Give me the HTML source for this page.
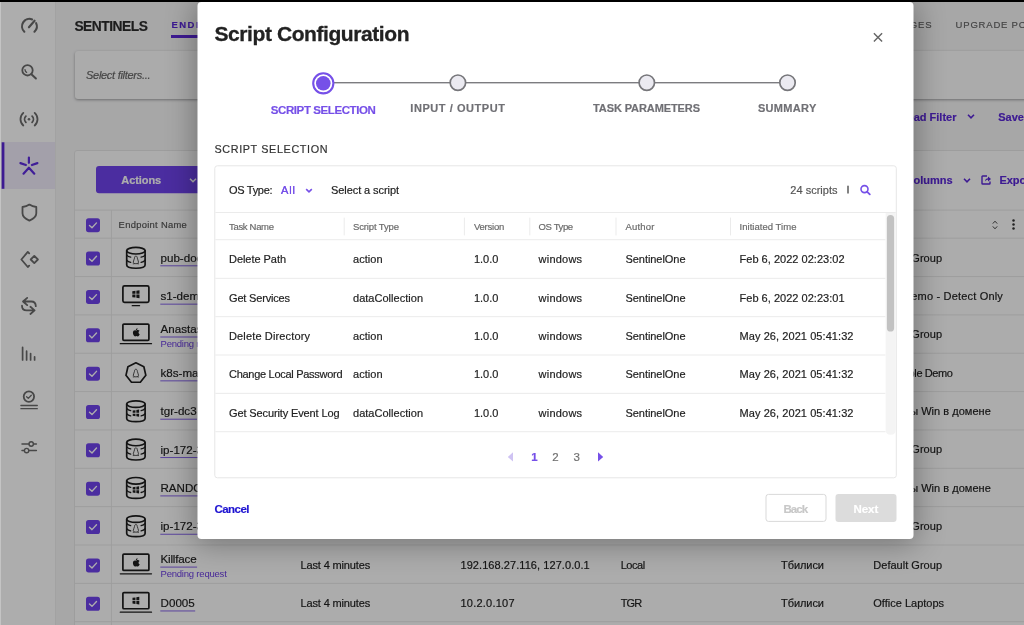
<!DOCTYPE html>
<html lang="en">
<head>
<meta charset="utf-8">
<title>Script Configuration</title>
<style>
*{box-sizing:border-box;margin:0;padding:0}
html,body{width:1024px;height:625px;overflow:hidden}
body{position:relative;background:#f6f6f7;font-family:"Liberation Sans","DejaVu Sans",sans-serif;font-size:11px;color:#333}
.abs{position:absolute;white-space:nowrap;-webkit-text-stroke:.18px currentColor}
#topbar{position:absolute;left:0;top:0;width:1024px;height:2px;background:#000;z-index:50}
#leftedge{position:absolute;left:0;top:2px;width:1px;height:623px;background:#c4c4c4;z-index:50}

/* ---------- background app ---------- */
#app{position:absolute;left:0;top:0;width:1024px;height:625px;overflow:hidden;will-change:transform}
#side{position:absolute;left:0;top:0;width:56px;height:625px;background:#fff;border-right:1px solid #efefef}
#side .act{position:absolute;left:0;top:142px;width:55px;height:47px;background:#f0ecfb}
#side .act i{display:none}
#side svg{position:absolute;overflow:visible}
.ic{fill:none;stroke:#6a6a6a;stroke-width:1.8;stroke-linecap:round;stroke-linejoin:round}
.icp{fill:none;stroke:#5f2de0;stroke-width:2.2;stroke-linecap:round;stroke-linejoin:round}

#pgtitle{left:74px;top:17px;font-size:14.5px;font-weight:bold;color:#2b2b2b;letter-spacing:-.1px;line-height:18px}
.tab{font-size:10px;letter-spacing:1.7px;color:#666;line-height:12px;top:19px}
.tab.on{color:#5a27d8;font-weight:bold}
#tabline{position:absolute;left:171px;top:35px;width:60px;height:3px;background:#5a27d8}
#filter{position:absolute;left:75px;top:51px;width:980px;height:48px;background:#fcfcfc;border-radius:3px;box-shadow:0 1px 3px rgba(0,0,0,.35)}
#filter span{left:11px;top:17px;font-style:italic;font-size:11px;color:#666;line-height:14px}
.lnk{font-weight:bold;color:#5a27d8;font-size:11.5px;line-height:14px}
#panel{position:absolute;left:74px;top:150px;width:980px;height:500px;background:#fefefe;border:1px solid #e8e8e8;border-radius:3px}
#actions{position:absolute;left:96px;top:166px;width:160px;height:27px;background:#6f43ec;border-radius:3px}
#actions span{left:25px;top:6.5px;color:#fff;font-weight:bold;font-size:11.5px;line-height:14px}
.hline{position:absolute;left:76px;width:960px;height:1px;background:#dedede}
.vline{position:absolute;width:1px;background:#dedede}
.cb{position:absolute;left:86px;width:14px;height:14px;background:#6b3fe4;border-radius:2.5px}
.cb svg{position:absolute;left:0;top:0}
.cell{position:absolute;white-space:nowrap;font-size:11.5px;line-height:14px;color:#222}
.nm{border-bottom:1px solid #6b3fe4;line-height:14px;padding-bottom:0}
.pend{position:absolute;white-space:nowrap;font-size:9.5px;line-height:11px;color:#5a27d8;left:160px}
.dev{position:absolute;overflow:visible}
.dv{fill:none;stroke:#1d1d1d;stroke-width:1.7;stroke-linejoin:round;stroke-linecap:round}

#overlay{position:absolute;left:0;top:0;width:1024px;height:625px;background:rgba(0,0,0,.32)}

/* ---------- modal ---------- */
#modal{will-change:transform;transform:translate(-.5px,-.1px);position:absolute;left:198px;top:2px;width:716px;height:537px;background:#fff;border-radius:4px;box-shadow:0 3px 30px 2px rgba(0,0,0,.33)}
#modal .abs{line-height:14px}
#mtitle{left:16px;top:20px;font-size:21px;font-weight:bold;color:#222;letter-spacing:-.42px;line-height:24px !important}
.step{font-size:11.5px;font-weight:bold;color:#6e6e73;letter-spacing:.45px;text-align:center;transform:translateX(-50%)}
.step.on{color:#6b45e0;font-size:12px;letter-spacing:.1px}
.dot{position:absolute;width:17px;height:17px;border-radius:50%;background:#e9e8f0;border:1.6px solid #85858c}
#sline{position:absolute;left:126px;top:80px;width:464px;height:2px;background:#8a8a90}
#sec{left:16.5px;top:140px;font-size:12px;letter-spacing:1.25px;color:#333}
#box{position:absolute;left:16.5px;top:164px;width:682.5px;height:313px;border:1px solid #e9e9e9;border-radius:4px;background:#fff}
.mh{position:absolute;left:17.5px;width:671px;height:1px;background:#ececec}
.mv{position:absolute;top:216px;width:1px;height:18px;background:#ececec}
.th{position:absolute;white-space:nowrap;font-size:10px;color:#666;line-height:12px;top:219px}
.td{position:absolute;white-space:nowrap;font-size:11.5px;color:#222;line-height:14px}
</style>
</head>
<body>
<div id="app">
<div id="side"><div class="act"><i></i></div><svg class="abs" style="left:0;top:0" width="56" height="625" viewBox="0 0 56 625"><path class="ic" d="M24.35 31.71A7.4 7.4 0 0 1 32.17 19.44 M36.11 23.17A7.4 7.4 0 0 1 34.45 31.71 M28.9 27.3L34.6 20.7" style="stroke-width:2.1"/><circle class="ic" cx="27.5" cy="70.3" r="5.2"/><path class="ic" d="M31.4 74.2L35.9 78.5" style="stroke-width:2"/><path class="ic" d="M25 69.6Q25.2 71.6 26.6 72.4" style="stroke-width:1.3"/><circle cx="29" cy="119.2" r="1.3" fill="#707070"/><path class="ic" d="M25.89 122.31A4.4 4.4 0 0 1 25.89 116.09 M32.11 116.09A4.4 4.4 0 0 1 32.11 122.31 M23.31 125.52A8.5 8.5 0 0 1 23.31 112.88 M34.69 112.88A8.5 8.5 0 0 1 34.69 125.52"/><path class="icp" d="M28.9 157.6V162.8M20.4 163.1L25.9 165M37.4 163.1L31.9 165M23.5 173.7L28.9 167.7L34.3 173.7"/><rect x="1.7" y="142.3" width="2.7" height="46.5" fill="#5a27d8"/><path class="ic" d="M29.4 204.6C27.4 206 25 206.8 22.5 207V213.2C22.5 216.6 25.4 218.8 29.4 220.6C33.4 218.8 36.3 216.6 36.3 213.2V207C33.8 206.8 31.4 206 29.4 204.6Z"/><path class="ic" d="M29.2 253.3L27.8 251.9L21.4 259.5L27.8 267L29.2 265.6"/><path class="ic" d="M34.3 255.9L37.9 259.5L34.3 263.1L30.7 259.5Z"/><path class="ic" d="M27.2 297.9L23 301.5L27.2 305.1M23.4 301.5H31.2C34.2 301.5 35.8 303.6 35.8 306.2"/><path class="ic" d="M30.4 306.8L34.6 310.4L30.4 314M34.2 310.4H26.6C23.6 310.4 22 308.3 22 305.7"/><path class="ic" d="M22.6 347.4V360M26.6 351.2V360M30.6 353.6V360M34.6 356.8V360" style="stroke-width:1.7"/><circle class="ic" cx="28.9" cy="396.6" r="5.2"/><path class="ic" d="M26.6 396.8L28.3 398.4L31.3 395.2" style="stroke-width:1.3"/><path class="ic" d="M20.9 405.5H37.3M20.9 408.7H37.3" style="stroke-width:1.3"/><path class="ic" d="M22 444H28.8M33.6 444H36.4M22 450.6H24.2M29 450.6H36.4" style="stroke-width:1.5"/><circle class="ic" cx="31.2" cy="444" r="2.2" style="stroke-width:1.4"/><circle class="ic" cx="26.6" cy="450.6" r="2.2" style="stroke-width:1.4"/></svg></div>
<span class="abs " style="left:74.4px;top:17.8px;font-size:13.8px;line-height:18px;font-weight:bold;color:#2b2b2b;letter-spacing:-0.481px">SENTINELS</span>
<span class="abs " style="left:171.4px;top:19.3px;font-size:9.5px;line-height:12px;font-weight:bold;color:#5a27d8;letter-spacing:1.5px">ENDPOINTS</span>
<div id="tabline" style="left:171px;top:35px;width:74px;height:3px"></div>
<span class="abs " style="left:880.0px;top:19.0px;font-size:9.5px;line-height:12px;color:#666;letter-spacing:0.9px;left:auto;right:91.6px">PACKAGES</span>
<span class="abs " style="left:955.6px;top:19.0px;font-size:9.5px;line-height:12px;color:#666;letter-spacing:0.8px">UPGRADE POLICY</span>
<div id="filter"></div>
<span class="abs " style="left:86.0px;top:68.3px;font-size:11px;line-height:14px;font-style:italic;color:#666;letter-spacing:-0.286px">Select filters...</span>
<span class="abs " style="left:880.0px;top:109.6px;font-size:11px;line-height:14px;font-weight:bold;color:#5a27d8;left:auto;right:67.5px">Load Filter</span>
<svg class="abs" style="left:966.5px;top:114.4px;overflow:visible" width="8" height="5" viewBox="0 0 8 5"><path d="M1 .8L4 3.8L7 .8" stroke="#5a27d8" stroke-width="1.6" fill="none"/></svg>
<span class="abs " style="left:998.2px;top:109.6px;font-size:11px;line-height:14px;font-weight:bold;color:#5a27d8">Save Filter</span>
<div id="panel"></div>
<svg class="abs" style="left:0;top:0" width="300" height="200" viewBox="0 0 300 200"><rect x="96" y="166.1" width="170" height="27.2" rx="3" fill="#6f43ec"/></svg>
<span class="abs " style="left:121.3px;top:173.0px;font-size:11px;line-height:14px;font-weight:bold;color:#fff;letter-spacing:-0.073px">Actions</span>
<svg class="abs" style="left:188.6px;top:177.8px;overflow:visible" width="8" height="5" viewBox="0 0 8 5"><path d="M1 .8L4 3.8L7 .8" stroke="#fff" stroke-width="1.5" fill="none"/></svg>
<span class="abs " style="left:880.0px;top:173.2px;font-size:11px;line-height:14px;font-weight:bold;color:#5a27d8;left:auto;right:71.4px">Columns</span>
<svg class="abs" style="left:963.2px;top:178px;overflow:visible" width="8" height="5" viewBox="0 0 8 5"><path d="M1 .8L4 3.8L7 .8" stroke="#5a27d8" stroke-width="1.6" fill="none"/></svg>
<svg class="abs" style="left:981.3px;top:175px;overflow:visible" width="10" height="10" viewBox="0 0 10 10"><path d="M6 1H1.6Q1 1 1 1.6V8.4Q1 9 1.6 9H8.4Q9 9 9 8.4V6.6" stroke="#5a27d8" stroke-width="1.4" fill="none"/><path d="M4 6.6C4 4 5.6 3.2 7 3.2V1.4L10 4L7 6.4V4.8C5.8 4.8 4.8 5.2 4 6.6Z" fill="#5a27d8"/></svg>
<span class="abs " style="left:999.4px;top:173.2px;font-size:11px;line-height:14px;font-weight:bold;color:#5a27d8">Export</span>
<span class="abs " style="left:118.6px;top:219.0px;font-size:9.4px;line-height:12px;color:#555;letter-spacing:0.3px">Endpoint Name</span>
<svg class="abs" style="left:992.4px;top:219.5px;overflow:visible" width="6" height="10" viewBox="0 0 6 10"><path d="M.8 3.6L3 1.2L5.2 3.6M.8 6.4L3 8.8L5.2 6.4" stroke="#444" stroke-width="1" fill="none"/></svg>
<svg class="abs" style="left:1011.5px;top:219.2px;overflow:visible" width="3" height="11" viewBox="0 0 3 11"><circle cx="1.5" cy="1.5" r="1.25" fill="#333"/><circle cx="1.5" cy="5.5" r="1.25" fill="#333"/><circle cx="1.5" cy="9.5" r="1.25" fill="#333"/></svg>
<span class="abs " style="left:160.5px;top:250.9px;font-size:11.6px;line-height:14px;color:#222">pub-docker-01</span>
<span class="abs " style="left:873.3px;top:250.7px;font-size:11px;line-height:14px;color:#222;letter-spacing:0.018px">Default Group</span>
<span class="abs " style="left:160.5px;top:289.2px;font-size:11.6px;line-height:14px;color:#222">s1-demo-win10</span>
<span class="abs " style="left:903.2px;top:289.1px;font-size:11px;line-height:14px;color:#222;letter-spacing:0.179px">Demo - Detect Only</span>
<span class="abs " style="left:160.5px;top:322.1px;font-size:11.6px;line-height:14px;color:#222">Anastasia-MBP</span>
<span class="abs " style="left:160.5px;top:338.1px;font-size:9.5px;line-height:11px;color:#6a3ce0;letter-spacing:-0.207px;-webkit-text-stroke:0">Pending request</span>
<span class="abs " style="left:873.3px;top:327.4px;font-size:11px;line-height:14px;color:#222;letter-spacing:0.018px">Default Group</span>
<span class="abs " style="left:160.5px;top:365.9px;font-size:11.6px;line-height:14px;color:#222">k8s-master-1</span>
<span class="abs " style="left:890.8px;top:365.8px;font-size:11px;line-height:14px;color:#222;letter-spacing:-0.383px">Simple Demo</span>
<span class="abs " style="left:160.5px;top:404.3px;font-size:11.6px;line-height:14px;color:#222">tgr-dc3</span>
<span class="abs " style="left:871.9px;top:404.1px;font-size:11px;line-height:14px;color:#222;letter-spacing:0.026px">Серверы Win в домене</span>
<span class="abs " style="left:160.5px;top:442.6px;font-size:11.6px;line-height:14px;color:#222">ip-172-31-20-7</span>
<span class="abs " style="left:873.3px;top:442.4px;font-size:11px;line-height:14px;color:#222;letter-spacing:0.018px">Default Group</span>
<span class="abs " style="left:160.5px;top:481.0px;font-size:11.6px;line-height:14px;color:#222">RANDOM-SRV</span>
<span class="abs " style="left:871.9px;top:480.8px;font-size:11px;line-height:14px;color:#222;letter-spacing:0.026px">Серверы Win в домене</span>
<span class="abs " style="left:160.5px;top:519.4px;font-size:11.6px;line-height:14px;color:#222">ip-172-31-44-9</span>
<span class="abs " style="left:873.3px;top:519.1px;font-size:11px;line-height:14px;color:#222;letter-spacing:0.018px">Default Group</span>
<span class="abs " style="left:160.5px;top:552.2px;font-size:11.6px;line-height:14px;color:#222;letter-spacing:-0.171px">Killface</span>
<span class="abs " style="left:160.5px;top:568.2px;font-size:9.5px;line-height:11px;color:#6a3ce0;letter-spacing:-0.207px;-webkit-text-stroke:0">Pending request</span>
<span class="abs " style="left:300.5px;top:557.5px;font-size:11px;line-height:14px;color:#222;letter-spacing:-0.141px">Last 4 minutes</span>
<span class="abs " style="left:460.5px;top:557.5px;font-size:11px;line-height:14px;color:#222;letter-spacing:0.065px">192.168.27.116, 127.0.0.1</span>
<span class="abs " style="left:620.7px;top:557.5px;font-size:11px;line-height:14px;color:#222;letter-spacing:-0.449px">Local</span>
<span class="abs " style="left:781.0px;top:557.5px;font-size:11px;line-height:14px;color:#222;letter-spacing:-0.062px">Тбилиси</span>
<span class="abs " style="left:873.3px;top:557.5px;font-size:11px;line-height:14px;color:#222;letter-spacing:0.018px">Default Group</span>
<span class="abs " style="left:160.5px;top:596.1px;font-size:11.6px;line-height:14px;color:#222;letter-spacing:0.029px">D0005</span>
<span class="abs " style="left:300.5px;top:595.9px;font-size:11px;line-height:14px;color:#222;letter-spacing:-0.141px">Last 4 minutes</span>
<span class="abs " style="left:460.5px;top:595.9px;font-size:11px;line-height:14px;color:#222;letter-spacing:0.223px">10.2.0.107</span>
<span class="abs " style="left:620.7px;top:595.9px;font-size:11px;line-height:14px;color:#222;letter-spacing:-0.86px">TGR</span>
<span class="abs " style="left:781.0px;top:595.9px;font-size:11px;line-height:14px;color:#222;letter-spacing:-0.062px">Тбилиси</span>
<span class="abs " style="left:873.3px;top:595.9px;font-size:11px;line-height:14px;color:#222;letter-spacing:0.005px">Office Laptops</span>
<svg class="abs" style="left:0;top:0" width="1024" height="625" viewBox="0 0 1024 625"><rect x="75" y="209.6" width="960" height="1" fill="#e8e8e8"/><rect x="75" y="237.7" width="960" height="1" fill="#e8e8e8"/><rect x="110.9" y="210" width="1" height="420" fill="#e8e8e8"/><rect x="86" y="218.2" width="14" height="14" rx="2.6" fill="#6f43ec"/><path d="M89.5 225.5L92 227.8L96.5 222.9" stroke="#fff" stroke-width="1.4" fill="none" stroke-linecap="round" stroke-linejoin="round"/><rect x="75" y="276.05" width="960" height="1" fill="#e8e8e8"/><rect x="86" y="251.6" width="14" height="14" rx="2.6" fill="#6f43ec"/><path d="M89.5 258.9L92 261.2L96.5 256.3" stroke="#fff" stroke-width="1.4" fill="none" stroke-linecap="round" stroke-linejoin="round"/><path class="dv" d="M126.70 250.70V265.10C126.70 269.30 145.10 269.30 145.10 265.10V250.70"/><ellipse class="dv" cx="135.90" cy="250.70" rx="9.2" ry="3.3"/><path class="dv" d="M126.70 255.10q1.4 1.6 4 2.1M145.10 255.10q-1.4 1.6 -4 2.1" style="stroke-width:1.3"/><path class="dv" d="M126.70 260.30q1.4 1.6 4 2.1M145.10 260.30q-1.4 1.6 -4 2.1" style="stroke-width:1.3"/><path d="M135.90 256.10c-1 0 -1.4 .9 -1.4 2c0 1.3 -1.2 2.3 -1.2 3.9c0 1.2 1 1.7 2.6 1.7c1.600 0 2.6 -.5 2.6 -1.7c0 -1.600 -1.2 -2.6 -1.2 -3.9c0 -1.1 -.4 -2 -1.400 -2z" fill="none" stroke="#333" stroke-width=".85"/><path d="M132.80 263.80h1.600M137.40 263.80h1.600" stroke="#333" stroke-width=".8"/><rect x="160.3" y="265.3" width="75.4028" height="1" fill="#8563e8"/><rect x="75" y="314.4" width="960" height="1" fill="#e8e8e8"/><rect x="86" y="289.95" width="14" height="14" rx="2.6" fill="#6f43ec"/><path d="M89.5 297.25L92 299.55L96.5 294.65" stroke="#fff" stroke-width="1.4" fill="none" stroke-linecap="round" stroke-linejoin="round"/><rect class="dv" x="122.90" y="285.85" width="26" height="16.6" rx="1.6"/><path class="dv" d="M132.30 305.65H139.50" style="stroke-width:1.4"/><path fill="#1d1d1d" d="M132.30 291.15L135.45 290.70V293.70H132.30ZM136.35 290.65L139.50 290.15V293.70H136.35ZM132.30 294.60H135.45V297.60L132.30 297.15ZM136.35 294.60H139.50V298.15L136.35 297.65Z"/><rect x="160.3" y="303.65" width="79.9059" height="1" fill="#8563e8"/><rect x="75" y="352.75" width="960" height="1" fill="#e8e8e8"/><rect x="86" y="328.3" width="14" height="14" rx="2.6" fill="#6f43ec"/><path d="M89.5 335.6L92 337.9L96.5 333" stroke="#fff" stroke-width="1.4" fill="none" stroke-linecap="round" stroke-linejoin="round"/><rect class="dv" x="122.90" y="324.10" width="26" height="16.2" rx="1"/><path class="dv" d="M120.30 343.70H151.50" style="stroke-width:1.3"/><path fill="#1d1d1d" d="M135.90 330.60c-1.2 -.7 -3 .1 -3 2.2c0 1.8 1.2 3.6 2.2 3.6c.5 0 .7 -.3 1.3 -.3c.6 0 .8 .3 1.3 .3c.9 0 1.7 -1.3 2 -2.2c-1.6 -.7 -1.5 -2.8 -.1 -3.4c-.9 -1.1 -2.4 -.9 -3.1 -.4c-.2 .1 -.4 .1 -.6 .2z"/><path fill="#1d1d1d" d="M135.80 330.10c0 -1 .8 -1.9 1.8 -1.9c.1 1 -.8 2 -1.8 1.9z"/><rect x="160.3" y="336.5" width="80.5457" height="1" fill="#8563e8"/><rect x="75" y="391.1" width="960" height="1" fill="#e8e8e8"/><rect x="86" y="366.65" width="14" height="14" rx="2.6" fill="#6f43ec"/><path d="M89.5 373.95L92 376.25L96.5 371.35" stroke="#fff" stroke-width="1.4" fill="none" stroke-linecap="round" stroke-linejoin="round"/><path class="dv" d="M135.90 362.85L143.87 366.69L145.84 375.32L140.33 382.24L131.47 382.24L125.96 375.32L127.93 366.69Z"/><path d="M135.90 369.25c-1 0 -1.4 .9 -1.4 2c0 1.3 -1.2 2.3 -1.2 3.9c0 1.2 1 1.7 2.6 1.7c1.600 0 2.6 -.5 2.6 -1.7c0 -1.600 -1.2 -2.6 -1.2 -3.9c0 -1.1 -.4 -2 -1.400 -2z" fill="none" stroke="#333" stroke-width=".85"/><path d="M132.80 376.95h1.600M137.40 376.95h1.600" stroke="#333" stroke-width=".8"/><rect x="160.3" y="380.35" width="68.2824" height="1" fill="#8563e8"/><rect x="75" y="429.45" width="960" height="1" fill="#e8e8e8"/><rect x="86" y="405" width="14" height="14" rx="2.6" fill="#6f43ec"/><path d="M89.5 412.3L92 414.6L96.5 409.7" stroke="#fff" stroke-width="1.4" fill="none" stroke-linecap="round" stroke-linejoin="round"/><path class="dv" d="M126.70 404.10V418.50C126.70 422.70 145.10 422.70 145.10 418.50V404.10"/><ellipse class="dv" cx="135.90" cy="404.10" rx="9.2" ry="3.3"/><path class="dv" d="M126.70 408.50q1.4 1.6 4 2.1M145.10 408.50q-1.4 1.6 -4 2.1" style="stroke-width:1.3"/><path class="dv" d="M126.70 413.70q1.4 1.6 4 2.1M145.10 413.70q-1.4 1.6 -4 2.1" style="stroke-width:1.3"/><path fill="#1d1d1d" d="M132.70 410.60L135.45 410.15V412.75H132.70ZM136.35 410.10L139.10 409.60V412.75H136.35ZM132.70 413.65H135.45V416.25L132.70 415.80ZM136.35 413.65H139.10V416.80L136.35 416.30Z"/><rect x="160.3" y="418.7" width="36.7041" height="1" fill="#8563e8"/><rect x="75" y="467.8" width="960" height="1" fill="#e8e8e8"/><rect x="86" y="443.35" width="14" height="14" rx="2.6" fill="#6f43ec"/><path d="M89.5 450.65L92 452.95L96.5 448.05" stroke="#fff" stroke-width="1.4" fill="none" stroke-linecap="round" stroke-linejoin="round"/><path class="dv" d="M126.70 442.45V456.85C126.70 461.05 145.10 461.05 145.10 456.85V442.45"/><ellipse class="dv" cx="135.90" cy="442.45" rx="9.2" ry="3.3"/><path class="dv" d="M126.70 446.85q1.4 1.6 4 2.1M145.10 446.85q-1.4 1.6 -4 2.1" style="stroke-width:1.3"/><path class="dv" d="M126.70 452.05q1.4 1.6 4 2.1M145.10 452.05q-1.4 1.6 -4 2.1" style="stroke-width:1.3"/><path d="M135.90 447.85c-1 0 -1.4 .9 -1.4 2c0 1.3 -1.2 2.3 -1.2 3.9c0 1.2 1 1.7 2.6 1.7c1.600 0 2.6 -.5 2.6 -1.7c0 -1.600 -1.2 -2.6 -1.2 -3.9c0 -1.1 -.4 -2 -1.400 -2z" fill="none" stroke="#333" stroke-width=".85"/><path d="M132.80 455.55h1.600M137.40 455.55h1.600" stroke="#333" stroke-width=".8"/><rect x="160.3" y="457.05" width="76.6951" height="1" fill="#8563e8"/><rect x="75" y="506.15" width="960" height="1" fill="#e8e8e8"/><rect x="86" y="481.7" width="14" height="14" rx="2.6" fill="#6f43ec"/><path d="M89.5 489L92 491.3L96.5 486.4" stroke="#fff" stroke-width="1.4" fill="none" stroke-linecap="round" stroke-linejoin="round"/><path class="dv" d="M126.70 480.80V495.20C126.70 499.40 145.10 499.40 145.10 495.20V480.80"/><ellipse class="dv" cx="135.90" cy="480.80" rx="9.2" ry="3.3"/><path class="dv" d="M126.70 485.20q1.4 1.6 4 2.1M145.10 485.20q-1.4 1.6 -4 2.1" style="stroke-width:1.3"/><path class="dv" d="M126.70 490.40q1.4 1.6 4 2.1M145.10 490.40q-1.4 1.6 -4 2.1" style="stroke-width:1.3"/><path fill="#1d1d1d" d="M132.70 487.30L135.45 486.85V489.45H132.70ZM136.35 486.80L139.10 486.30V489.45H136.35ZM132.70 490.35H135.45V492.95L132.70 492.50ZM136.35 490.35H139.10V493.50L136.35 493.00Z"/><rect x="160.3" y="495.4" width="79.6622" height="1" fill="#8563e8"/><rect x="75" y="544.5" width="960" height="1" fill="#e8e8e8"/><rect x="86" y="520.05" width="14" height="14" rx="2.6" fill="#6f43ec"/><path d="M89.5 527.35L92 529.65L96.5 524.75" stroke="#fff" stroke-width="1.4" fill="none" stroke-linecap="round" stroke-linejoin="round"/><path class="dv" d="M126.70 519.15V533.55C126.70 537.75 145.10 537.75 145.10 533.55V519.15"/><ellipse class="dv" cx="135.90" cy="519.15" rx="9.2" ry="3.3"/><path class="dv" d="M126.70 523.55q1.4 1.6 4 2.1M145.10 523.55q-1.4 1.6 -4 2.1" style="stroke-width:1.3"/><path class="dv" d="M126.70 528.75q1.4 1.6 4 2.1M145.10 528.75q-1.4 1.6 -4 2.1" style="stroke-width:1.3"/><path d="M135.90 524.55c-1 0 -1.4 .9 -1.4 2c0 1.3 -1.2 2.3 -1.2 3.9c0 1.2 1 1.7 2.6 1.7c1.600 0 2.6 -.5 2.6 -1.7c0 -1.600 -1.2 -2.6 -1.2 -3.9c0 -1.1 -.4 -2 -1.400 -2z" fill="none" stroke="#333" stroke-width=".85"/><path d="M132.80 532.25h1.600M137.40 532.25h1.600" stroke="#333" stroke-width=".8"/><rect x="160.3" y="533.75" width="76.6951" height="1" fill="#8563e8"/><rect x="75" y="582.85" width="960" height="1" fill="#e8e8e8"/><rect x="86" y="558.4" width="14" height="14" rx="2.6" fill="#6f43ec"/><path d="M89.5 565.7L92 568L96.5 563.1" stroke="#fff" stroke-width="1.4" fill="none" stroke-linecap="round" stroke-linejoin="round"/><rect class="dv" x="122.90" y="554.20" width="26" height="16.2" rx="1"/><path class="dv" d="M120.30 573.80H151.50" style="stroke-width:1.3"/><path fill="#1d1d1d" d="M135.90 560.70c-1.2 -.7 -3 .1 -3 2.2c0 1.8 1.2 3.6 2.2 3.6c.5 0 .7 -.3 1.3 -.3c.6 0 .8 .3 1.3 .3c.9 0 1.7 -1.3 2 -2.2c-1.6 -.7 -1.5 -2.8 -.1 -3.4c-.9 -1.1 -2.4 -.9 -3.1 -.4c-.2 .1 -.4 .1 -.6 .2z"/><path fill="#1d1d1d" d="M135.80 560.20c0 -1 .8 -1.9 1.8 -1.9c.1 1 -.8 2 -1.8 1.9z"/><rect x="160.3" y="566.6" width="36.8" height="1" fill="#8563e8"/><rect x="75" y="621.2" width="960" height="1" fill="#e8e8e8"/><rect x="86" y="596.75" width="14" height="14" rx="2.6" fill="#6f43ec"/><path d="M89.5 604.05L92 606.35L96.5 601.45" stroke="#fff" stroke-width="1.4" fill="none" stroke-linecap="round" stroke-linejoin="round"/><rect class="dv" x="122.90" y="592.55" width="26" height="16.2" rx="1"/><path class="dv" d="M120.30 612.15H151.50" style="stroke-width:1.3"/><path fill="#1d1d1d" d="M132.50 597.85L135.45 597.40V600.20H132.50ZM136.35 597.35L139.30 596.85V600.20H136.35ZM132.50 601.10H135.45V603.90L132.50 603.45ZM136.35 601.10H139.30V604.45L136.35 603.95Z"/><rect x="160.3" y="610.45" width="34.9" height="1" fill="#8563e8"/></svg>
</div>
<div id="overlay"></div>
<div id="modal">
<span class="abs " style="left:17.0px;top:20.1px;font-size:21px;line-height:24px;font-weight:bold;color:#222;letter-spacing:-0.421px;-webkit-text-stroke:.3px #222">Script Configuration</span>
<svg class="abs" style="left:674.7px;top:30.1px" width="11" height="11" viewBox="0 0 11 11"><path d="M1.4 1.4L9.6 9.6M9.6 1.4L1.4 9.6" stroke="#666" stroke-width="1.45" fill="none"/></svg>
<svg class="abs" style="left:0;top:0" width="716" height="110" viewBox="197.5 1.9 716 110"><rect x="323" y="82" width="465" height="1.4" fill="#7c7c80"/><circle cx="323.3" cy="83.3" r="10.1" fill="#fff" stroke="#7650e8" stroke-width="2.1"/><circle cx="323.3" cy="83.3" r="7.3" fill="#7650e8"/><circle cx="457.9" cy="82.7" r="7.7" fill="#ebeaf1" stroke="#77777b" stroke-width="1.7"/><circle cx="646.8" cy="82.7" r="7.7" fill="#ebeaf1" stroke="#77777b" stroke-width="1.7"/><circle cx="787.5" cy="82.7" r="7.7" fill="#ebeaf1" stroke="#77777b" stroke-width="1.7"/></svg>
<span class="abs " style="left:73.3px;top:101.1px;font-size:11.5px;line-height:14px;font-weight:bold;color:#7650e8;letter-spacing:-0.412px">SCRIPT SELECTION</span>
<span class="abs " style="left:212.8px;top:99.1px;font-size:11px;line-height:14px;font-weight:bold;color:#707075;letter-spacing:0.562px">INPUT / OUTPUT</span>
<span class="abs " style="left:395.5px;top:99.1px;font-size:11px;line-height:14px;font-weight:bold;color:#707075;letter-spacing:-0.098px">TASK PARAMETERS</span>
<span class="abs " style="left:560.4px;top:99.1px;font-size:11px;line-height:14px;font-weight:bold;color:#707075;letter-spacing:0.329px">SUMMARY</span>
<span class="abs " style="left:17.0px;top:139.7px;font-size:10.8px;line-height:14px;color:#333;letter-spacing:0.625px">SCRIPT SELECTION</span>
<span class="abs " style="left:31.5px;top:181.1px;font-size:11px;line-height:14px;color:#222;letter-spacing:-0.308px">OS Type:</span>
<span class="abs " style="left:83.5px;top:181.1px;font-size:11px;line-height:14px;color:#7650e8;letter-spacing:0.887px;text-shadow:0 0 .4px #7650e8">All</span>
<svg class="abs" style="left:107px;top:185.5px" width="9" height="6" viewBox="0 0 9 6"><path d="M1.7 1.2L4.5 4L7.3 1.2" stroke="#7650e8" stroke-width="1.6" fill="none"/></svg>
<span class="abs " style="left:133.5px;top:181.1px;font-size:11px;line-height:14px;color:#222;letter-spacing:-0.077px">Select a script</span>
<span class="abs " style="left:592.8px;top:181.1px;font-size:11px;line-height:14px;color:#555;letter-spacing:0.014px">24 scripts</span>
<svg class="abs" style="left:648.5px;top:183.1px" width="3" height="10" viewBox="0 0 3 10"><rect x=".9" y=".8" width="1.2" height="7.8" fill="#333"/></svg>
<svg class="abs" style="left:661.8px;top:182.4px" width="12" height="12" viewBox="0 0 12 12"><circle cx="5" cy="5.2" r="3.5" stroke="#7650e8" stroke-width="1.6" fill="none"/><path d="M7.7 7.9L10.3 10.5" stroke="#7650e8" stroke-width="1.8" stroke-linecap="round"/></svg>
<span class="abs " style="left:31.5px;top:218.6px;font-size:9.5px;line-height:12px;color:#6a6a6a;letter-spacing:-0.314px">Task Name</span>
<span class="abs " style="left:155.5px;top:218.6px;font-size:9.5px;line-height:12px;color:#6a6a6a;letter-spacing:-0.135px">Script Type</span>
<span class="abs " style="left:276.4px;top:218.6px;font-size:9.5px;line-height:12px;color:#6a6a6a;letter-spacing:-0.198px">Version</span>
<span class="abs " style="left:341.1px;top:218.6px;font-size:9.5px;line-height:12px;color:#6a6a6a;letter-spacing:-0.382px">OS Type</span>
<span class="abs " style="left:428.0px;top:218.6px;font-size:9.5px;line-height:12px;color:#6a6a6a;letter-spacing:0.202px">Author</span>
<span class="abs " style="left:542.0px;top:218.6px;font-size:9.5px;line-height:12px;color:#6a6a6a;letter-spacing:0.038px">Initiated Time</span>
<span class="abs " style="left:31.5px;top:250.2px;font-size:11px;line-height:14px;color:#222;letter-spacing:-0.048px">Delete Path</span>
<span class="abs " style="left:155.5px;top:250.2px;font-size:11px;line-height:14px;color:#222;letter-spacing:0.029px">action</span>
<span class="abs " style="left:276.4px;top:250.2px;font-size:11px;line-height:14px;color:#222;letter-spacing:0.009px">1.0.0</span>
<span class="abs " style="left:341.1px;top:250.2px;font-size:11px;line-height:14px;color:#222;letter-spacing:0.219px">windows</span>
<span class="abs " style="left:428.0px;top:250.2px;font-size:11px;line-height:14px;color:#222;letter-spacing:-0.054px">SentinelOne</span>
<span class="abs " style="left:542.0px;top:250.2px;font-size:11px;line-height:14px;color:#222;letter-spacing:0.022px">Feb 6, 2022 02:23:02</span>
<span class="abs " style="left:31.5px;top:288.5px;font-size:11px;line-height:14px;color:#222;letter-spacing:-0.179px">Get Services</span>
<span class="abs " style="left:155.5px;top:288.5px;font-size:11px;line-height:14px;color:#222;letter-spacing:0.022px">dataCollection</span>
<span class="abs " style="left:276.4px;top:288.5px;font-size:11px;line-height:14px;color:#222;letter-spacing:0.009px">1.0.0</span>
<span class="abs " style="left:341.1px;top:288.5px;font-size:11px;line-height:14px;color:#222;letter-spacing:0.219px">windows</span>
<span class="abs " style="left:428.0px;top:288.5px;font-size:11px;line-height:14px;color:#222;letter-spacing:-0.054px">SentinelOne</span>
<span class="abs " style="left:542.0px;top:288.5px;font-size:11px;line-height:14px;color:#222;letter-spacing:0.022px">Feb 6, 2022 02:23:01</span>
<span class="abs " style="left:31.5px;top:326.9px;font-size:11px;line-height:14px;color:#222;letter-spacing:0.143px">Delete Directory</span>
<span class="abs " style="left:155.5px;top:326.9px;font-size:11px;line-height:14px;color:#222;letter-spacing:0.029px">action</span>
<span class="abs " style="left:276.4px;top:326.9px;font-size:11px;line-height:14px;color:#222;letter-spacing:0.009px">1.0.0</span>
<span class="abs " style="left:341.1px;top:326.9px;font-size:11px;line-height:14px;color:#222;letter-spacing:0.219px">windows</span>
<span class="abs " style="left:428.0px;top:326.9px;font-size:11px;line-height:14px;color:#222;letter-spacing:-0.054px">SentinelOne</span>
<span class="abs " style="left:542.0px;top:326.9px;font-size:11px;line-height:14px;color:#222;letter-spacing:0.073px">May 26, 2021 05:41:32</span>
<span class="abs " style="left:31.5px;top:365.2px;font-size:11px;line-height:14px;color:#222;letter-spacing:-0.287px">Change Local Password</span>
<span class="abs " style="left:155.5px;top:365.2px;font-size:11px;line-height:14px;color:#222;letter-spacing:0.029px">action</span>
<span class="abs " style="left:276.4px;top:365.2px;font-size:11px;line-height:14px;color:#222;letter-spacing:0.009px">1.0.0</span>
<span class="abs " style="left:341.1px;top:365.2px;font-size:11px;line-height:14px;color:#222;letter-spacing:0.219px">windows</span>
<span class="abs " style="left:428.0px;top:365.2px;font-size:11px;line-height:14px;color:#222;letter-spacing:-0.054px">SentinelOne</span>
<span class="abs " style="left:542.0px;top:365.2px;font-size:11px;line-height:14px;color:#222;letter-spacing:0.073px">May 26, 2021 05:41:32</span>
<span class="abs " style="left:31.5px;top:403.6px;font-size:11px;line-height:14px;color:#222;letter-spacing:-0.12px">Get Security Event Log</span>
<span class="abs " style="left:155.5px;top:403.6px;font-size:11px;line-height:14px;color:#222;letter-spacing:0.022px">dataCollection</span>
<span class="abs " style="left:276.4px;top:403.6px;font-size:11px;line-height:14px;color:#222;letter-spacing:0.009px">1.0.0</span>
<span class="abs " style="left:341.1px;top:403.6px;font-size:11px;line-height:14px;color:#222;letter-spacing:0.219px">windows</span>
<span class="abs " style="left:428.0px;top:403.6px;font-size:11px;line-height:14px;color:#222;letter-spacing:-0.054px">SentinelOne</span>
<span class="abs " style="left:542.0px;top:403.6px;font-size:11px;line-height:14px;color:#222;letter-spacing:0.073px">May 26, 2021 05:41:32</span>
<svg class="abs" style="left:0;top:0" width="716" height="537" viewBox="197.5 1.9 716 537"><rect x="214.8" y="165.8" width="681.5" height="312" rx="2.5" fill="none" stroke="#e6e6e6" stroke-width="1"/><rect x="215.3" y="212" width="680.5" height="1" fill="#ebebeb"/><rect x="215.3" y="239.2" width="670.2" height="1" fill="#ebebeb"/><rect x="215.3" y="277.84" width="670.2" height="1" fill="#ebebeb"/><rect x="215.3" y="316.18" width="670.2" height="1" fill="#ebebeb"/><rect x="215.3" y="354.52" width="670.2" height="1" fill="#ebebeb"/><rect x="215.3" y="392.86" width="670.2" height="1" fill="#ebebeb"/><rect x="215.3" y="431.2" width="670.2" height="1" fill="#ebebeb"/><rect x="343.7" y="217.6" width="1" height="17.8" fill="#ebebeb"/><rect x="463.9" y="217.6" width="1" height="17.8" fill="#ebebeb"/><rect x="529.3" y="217.6" width="1" height="17.8" fill="#ebebeb"/><rect x="615.5" y="217.6" width="1" height="17.8" fill="#ebebeb"/><rect x="730" y="217.6" width="1" height="17.8" fill="#ebebeb"/><path d="M885.6 213H895.8V430Q895.8 434.8 890.7 434.8Q885.6 434.8 885.6 430Z" fill="#f4f4f4"/><rect x="886.9" y="214.9" width="7.2" height="116.6" rx="3.6" fill="#c2c2c2"/></svg>
<svg class="abs" style="left:310.1px;top:449.6px" width="6" height="10" viewBox="0 0 6 10"><path d="M5.5 0.3L0.3 5L5.5 9.7Z" fill="#cfc3f3"/></svg>
<span class="abs " style="left:333.8px;top:447.9px;font-size:11.5px;line-height:14px;font-weight:bold;color:#7650e8">1</span>
<span class="abs " style="left:354.8px;top:447.9px;font-size:11.5px;line-height:14px;color:#707070">2</span>
<span class="abs " style="left:376.0px;top:447.9px;font-size:11.5px;line-height:14px;color:#707070">3</span>
<svg class="abs" style="left:400.2px;top:449.6px" width="6" height="10" viewBox="0 0 6 10"><path d="M0.5 0.3L5.7 5L0.5 9.7Z" fill="#7650e8"/></svg>
<span class="abs " style="left:17.0px;top:499.6px;font-size:11.5px;line-height:14px;font-weight:bold;color:#1f14d1;letter-spacing:-0.543px">Cancel</span>
<div style="position:absolute;left:567.6px;top:492.4px;width:61.6px;height:27.6px;border:1px solid #d9d9d9;border-radius:3px;background:#fff"></div>
<span class="abs " style="left:585.9px;top:499.6px;font-size:11.5px;line-height:14px;font-weight:bold;color:#c8c8c8;letter-spacing:-0.898px">Back</span>
<div style="position:absolute;left:637.6px;top:492.4px;width:61.4px;height:27.6px;border-radius:3px;background:#dcdcdc"></div>
<span class="abs " style="left:655.9px;top:499.6px;font-size:11.5px;line-height:14px;font-weight:bold;color:#fff;letter-spacing:-0.009px">Next</span>
</div>
<div id="topbar"></div>
<div id="leftedge"></div>
</body>
</html>
